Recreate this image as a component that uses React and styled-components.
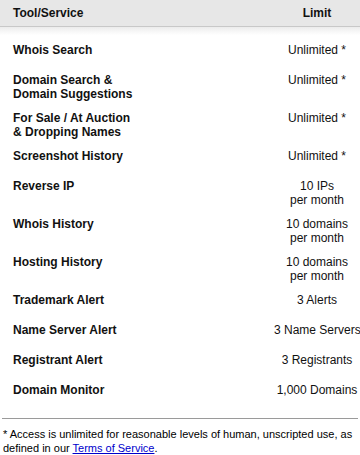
import React from "react";
import styled, { createGlobalStyle } from "styled-components";

const Global = createGlobalStyle`
  html, body { margin: 0; padding: 0; background: #fff; }
  body { font-family: "Liberation Sans", Arial, sans-serif; color: #000; }
`;

const Page = styled.div`
  width: 360px;
`;

const Header = styled.div`
  display: grid;
  grid-template-columns: 1fr 86px;
  align-items: center;
  height: 26px;
  background: #e7e7e7;
  border-bottom: 1px solid #c8c8c8;
  font-size: 12px;
  font-weight: bold;
  color: #111;
`;

const HeadCell = styled.div`
  padding-left: ${(p) => (p.$center ? "0" : "13px")};
  text-align: ${(p) => (p.$center ? "center" : "left")};
`;

const Shade = styled.div`
  height: 8px;
  background: linear-gradient(#ececec, #ffffff);
`;

const List = styled.div`
  padding-top: 3px;
`;

const Row = styled.div`
  display: grid;
  grid-template-columns: 1fr 86px;
  align-items: start;
  box-sizing: border-box;
  min-height: 30px;
  padding: 5px 0;
  font-size: 12px;
  line-height: 14px;
`;

const Name = styled.div`
  padding-left: 13px;
  font-weight: bold;
  color: #111;
`;

const Value = styled.div`
  text-align: center;
  white-space: nowrap;
  color: #111;
`;

const Divider = styled.div`
  height: 1px;
  background: #9a9a9a;
  margin: 10px 2px 0;
`;

const Note = styled.p`
  margin: 8px 0 0;
  padding: 0 3px;
  font-size: 11px;
  line-height: 14px;
`;

const Link = styled.a`
  color: #0000cc;
  text-decoration: underline;
`;

const rows = [
  [["Whois Search"], ["Unlimited *"]],
  [["Domain Search &", "Domain Suggestions"], ["Unlimited *"]],
  [["For Sale / At Auction", "& Dropping Names"], ["Unlimited *"]],
  [["Screenshot History"], ["Unlimited *"]],
  [["Reverse IP"], ["10 IPs", "per month"]],
  [["Whois History"], ["10 domains", "per month"]],
  [["Hosting History"], ["10 domains", "per month"]],
  [["Trademark Alert"], ["3 Alerts"]],
  [["Name Server Alert"], ["3 Name Servers"]],
  [["Registrant Alert"], ["3 Registrants"]],
  [["Domain Monitor"], ["1,000 Domains"]],
];

const Lines = ({ items }) =>
  items.map((t, i) => (
    <React.Fragment key={i}>
      {i > 0 && <br />}
      {t}
    </React.Fragment>
  ));

export default function App() {
  return (
    <Page>
      <Global />
      <Header>
        <HeadCell>Tool/Service</HeadCell>
        <HeadCell $center>Limit</HeadCell>
      </Header>
      <Shade />
      <List>
        {rows.map(([name, value], i) => (
          <Row key={i}>
            <Name>
              <Lines items={name} />
            </Name>
            <Value>
              <Lines items={value} />
            </Value>
          </Row>
        ))}
      </List>
      <Divider />
      <Note>
        * Access is unlimited for reasonable levels of human, unscripted use, as
        defined in our <Link href="#">Terms of Service</Link>.
      </Note>
    </Page>
  );
}
